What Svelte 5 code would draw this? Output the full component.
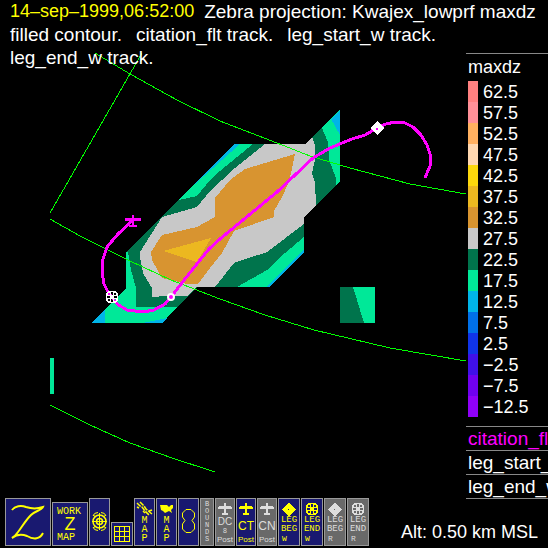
<script>
  const scale = [
    { value: "62.5", color: "#ff8080" },
    { value: "57.5", color: "#ff9098" },
    { value: "52.5", color: "#ffb060" },
    { value: "47.5", color: "#ffd8b0" },
    { value: "42.5", color: "#fcd80c" },
    { value: "37.5", color: "#ecb820" },
    { value: "32.5", color: "#d89430" },
    { value: "27.5", color: "#c8c8c8" },
    { value: "22.5", color: "#00744c" },
    { value: "17.5", color: "#00e898" },
    { value: "12.5", color: "#00b4e8" },
    { value: "7.5", color: "#0070e8" },
    { value: "2.5", color: "#1034e8" },
    { value: "−2.5", color: "#4010e8" },
    { value: "−7.5", color: "#7000f0" },
    { value: "−12.5", color: "#9000f8" },
  ];

  const layers = [
    { name: "citation_flt", active: true },
    { name: "leg_start_w" },
    { name: "leg_end_w" },
  ];

  const posts = [
    { lines: ["DC", "8"], on: false },
    { lines: ["CT"], on: true },
    { lines: ["CN"], on: false },
  ];

  const legs = [
    { mark: "diamond", word: "BEG", side: "W", on: true },
    { mark: "target", word: "END", side: "W", on: true },
    { mark: "diamond", word: "BEG", side: "R", on: false },
    { mark: "target", word: "END", side: "R", on: false },
  ];
</script>

{#snippet target()}
  <path
    fill="currentColor"
    fill-rule="evenodd"
    stroke="none"
    d="M-4 -6H4V-5H5V-4H6V4H5V5H4V6H-4V5H-5V4H-6V-4H-5V-5H-4ZM-4 -4V-2H-2V-4ZM2 -4V-2H4V-4ZM-4 2V4H-2V2ZM2 2V4H4V2ZM-1 -5V-2H1V-5ZM-1 2V5H1V2ZM-5 -1V1H-2V-1ZM2 -1V1H5V-1Z"
  />
{/snippet}

<main>
  <section class="stage">
    <svg class="map" viewBox="0 0 466 498" role="img" aria-label="maxdz filled contour">
      <g shape-rendering="crispEdges">
        <path
          fill="#00e898"
          d="M234 144H305L340 110V181L304 217V251L269 287H197L162 323H91L126 288V252ZM340 287H375V323H340ZM50 358H54V394H50Z"
        />
        <path
          fill="#00b4e8"
          d="M234 144H240L195 184ZM340 110L331 119L340 135ZM304 249V252L269 287H266ZM91 323L105 309V323ZM143 323L167 318L162 323Z"
        />
        <path
          fill="#00744c"
          d="M253 144L231 162L220 171L210 180L197 196L179 200L126 252H128L131 270L136 288V307H177L197 287H237L267 270L285 253L304 237V217L316 205L336 185V178L329 160L328 142L322 128L305 144ZM340 287H353L364 323H340Z"
        />
        <path
          fill="#c8c8c8"
          d="M265 144H305L312 137L315 145V160L312 173L315 183L316 205L304 217V224L267 252L234 263L215 287H197L187 296H165L152 297V288L143 273L140 257V252L162 217L197 207L210 191L222 180L235 168Z"
        />
        <path
          fill="#d89430"
          d="M295 154L291 173L288 184L282 197L274 211V217L234 231L222 253L210 268L198 284H187L162 278L152 260L151 252L162 235L197 227L215 217V198L230 180L245 169Z"
        />
        <path fill="#ecb820" d="M163 251L211 238L197 262Z" />
        <g fill="none" stroke="#00ff00">
          <path d="M50 213L142 53" />
          <path d="M95 53L130 74L177 100L220 121L277 143L310 156L350 168L410 184L466 194" />
          <path d="M50 219L80 236L130 261L171 280L220 299L265 315L314 330L390 348L466 361" />
          <path d="M50 405L90 425L130 443L172 458L215 472" />
        </g>
        <path
          fill="none"
          stroke="#ff00ff"
          stroke-width="3"
          stroke-linejoin="round"
          d="M133 220L118 234L107 247L103 259L102 272L104 284L108 292L117 304L127 310L143 312L154 310L165 304L171 297L185 279L200 260L209 249L220 239L243 220L277 192L313 158L330 148L352 139L365 135L377 128L386 124L395 122L405 123L413 127L421 135L427 145L431 157L430 166L425 178"
        />
        <path fill="#ff00ff" d="M125 218H141V221H125ZM132 215H134V227H132ZM129 225H137V227H129Z" />
        <path fill="#fff" d="M377 121L384 128L377 135L370 128Z" />
        <path fill="#ff00ff" d="M376 128H378V130H376Z" />
        <g class="fix" transform="translate(112 297)">{@render target()}</g>
      </g>
      <circle cx="171" cy="297" r="3" fill="#ff00ff" stroke="#fff" stroke-width="2" />
    </svg>

    <header>
      <p class="first"><time>14–sep–1999,06:52:00</time><span>Zebra projection: Kwajex_lowprf maxdz</span></p>
      <p><span>filled contour.</span><span>citation_flt track.</span><span>leg_start_w track.</span></p>
      <p><span>leg_end_w track.</span></p>
    </header>

    <aside>
      <h2>maxdz</h2>
      <ul class="scale">
        {#each scale as step}
          <li>
            <span class="swatch" style="background: {step.color}"></span>
            {step.value}
          </li>
        {/each}
      </ul>
      <ul class="layers">
        {#each layers as layer}
          <li class:active={layer.active}>{layer.name}</li>
        {/each}
      </ul>
    </aside>
  </section>

  <footer>
    <nav>
      <button class="zebra" aria-label="Zebra">
        <svg viewBox="0 0 44 46" width="44" height="46">
          <path
            d="M6 11C9 7 15 6 20 8C26 10 31 10 37 8C36 11 29 12 25 16C19 22 16 28 12 33C10 36 8 38 6 39C11 35 16 35 21 37C28 41 34 40 37 34"
            stroke-width="2"
          />
        </svg>
      </button>
      <button class="work">
        <span>WORK</span>
        <span class="big">Z</span>
        <span>MAP</span>
      </button>
      <button class="narrow" aria-label="Radar">
        <svg viewBox="0 0 19 46" width="19" height="46">
          <circle cx="9.500" cy="22.500" r="6.500" stroke-width="1.500" />
          <circle cx="9.500" cy="22.500" r="3" stroke-width="1.500" />
          <path d="M9.500 14V31M2 22.500H17M3 17Q4 13.500 8 13.500M16 17Q15 13.500 11 13.500M3 28Q4 31.500 8 31.500M16 28Q15 31.500 11 31.500M3 16L6 18M16 16L13 18M3 29L6 27M16 29L13 27" />
        </svg>
      </button>
      <button class="grid" aria-label="Grid">
        <svg viewBox="0 0 20 22" width="20" height="22" shape-rendering="crispEdges">
          <path d="M2.500 3.500H17.500V18.500H2.500ZM7.500 3.500V18.500M12.500 3.500V18.500M2.500 8.500H17.500M2.500 13.500H17.500" />
        </svg>
      </button>
      <button class="narrow map-button">
        <svg viewBox="0 0 19 17" width="19" height="17">
          <path
            stroke-width="1.500"
            stroke-dasharray="5 1"
            d="M2 4L5 7L7 8L10 12L14 16M5 3L9 7L11 10L17 15M2 8L4 9M8 12L10 14M14 12L17 11"
          />
        </svg>
        <span>M</span><span>A</span><span>P</span>
      </button>
      <button class="narrow map-button">
        <svg viewBox="0 0 19 17" width="19" height="17">
          <path
            fill="currentColor"
            stroke="none"
            d="M3 6H10L12 8L14 6H16V9L14 11L15 14L12 12L10 13L8 14L6 12L4 11Z"
          />
        </svg>
        <span>M</span><span>A</span><span>P</span>
      </button>
      <button class="narrow" aria-label="Figure eight">
        <svg viewBox="0 0 19 46" width="19" height="46">
          <path d="M7 10.500H12L15.500 14V18L13 21.500L15.500 25V30L12 33.500H7L3.500 30V25L6 21.500L3.500 18V14Z" />
        </svg>
      </button>
      <button class="bounds off">
        {#each "BOUNDS" as letter}
          <span>{letter}</span>
        {/each}
      </button>
      {#each posts as post}
        <button class="post" class:off={!post.on}>
          <svg viewBox="0 0 18 18" width="18" height="18" shape-rendering="crispEdges">
            <path
              fill="currentColor"
              stroke="none"
              d="M8 4H10V7H15V8H16V10H10V14H12V16H6V14H8V10H2V8H3V7H8Z"
            />
          </svg>
          {#each post.lines as line}
            <span class:single={post.lines.length === 1} class:digit={line === "8"}>{line}</span>
          {/each}
          <span class="small">Post</span>
        </button>
      {/each}
      {#each legs as leg}
        <button class="leg" class:off={!leg.on}>
          <svg viewBox="0 0 20 17" width="20" height="17" shape-rendering="crispEdges">
            {#if leg.mark === "diamond"}
              <path
                fill="currentColor"
                fill-rule="evenodd"
                stroke="none"
                d="M10 4L17 10.500L10 17L3 10.500ZM9 10V11H10V10Z"
              />
            {:else}
              <g transform="translate(10 10)">{@render target()}</g>
            {/if}
          </svg>
          <span>LEG</span>
          <span>{leg.word}</span>
          <span class="side">{leg.side}</span>
        </button>
      {/each}
    </nav>
    <output>Alt: 0.50 km MSL</output>
  </footer>
</main>

<style>
  :global(body) {
    margin: 0;
    background: #000;
  }
  main {
    display: flex;
    flex-direction: column;
    min-height: 100vh;
    background: #000;
    color: #fff;
    font-family: "Liberation Sans", Arial, sans-serif;
    font-size: 18px;
    line-height: 23px;
    overflow: hidden;
  }
  p,
  h2,
  ul {
    margin: 0;
    padding: 0;
    list-style: none;
  }

  /* header and map share the same grid area, text on top */
  .stage {
    display: grid;
    grid-template-columns: minmax(0, 1fr) 82px;
    align-items: start;
  }
  .map {
    grid-area: 1 / 1;
    display: block;
    width: 100%;
  }
  .fix {
    color: #fff;
  }
  header {
    grid-area: 1 / 1 / 2 / 3;
    padding: 0 10px;
    white-space: nowrap;
  }
  header p {
    display: flex;
    gap: 14px;
    font-size: 19px;
  }
  header .first {
    gap: 10px;
  }
  time {
    color: #ffff00;
    font-size: 18px;
  }

  aside {
    grid-area: 1 / 2;
    margin-top: 53px;
    border-top: 1px solid #888;
    white-space: nowrap;
    overflow: hidden;
  }
  h2 {
    padding: 2px 2px;
    font-size: 18px;
    font-weight: normal;
  }
  .scale {
    padding: 0 2px 9px;
  }
  .scale li {
    display: flex;
    gap: 5px;
    height: 21px;
  }
  .swatch {
    width: 10px;
  }
  .layers {
    border-top: 1px solid #888;
  }
  .layers li {
    height: 23px;
    padding-left: 2px;
    font-size: 19px;
    border-bottom: 1px solid #888;
  }
  .active {
    color: #ff00ff;
  }

  footer {
    display: flex;
    justify-content: space-between;
    align-items: flex-end;
    margin-top: -1px;
    padding: 0 10px 2px 5px;
  }
  output {
    padding-bottom: 2px;
    white-space: nowrap;
  }
  nav {
    display: flex;
    align-items: flex-end;
    gap: 1px;
  }
  button {
    box-sizing: border-box;
    display: flex;
    flex: none;
    flex-direction: column;
    align-items: center;
    height: 48px;
    margin: 0;
    padding: 0;
    border: 1px solid #999;
    background: #191970;
    color: #ffff00;
    font-family: "Liberation Mono", "Courier New", monospace;
    font-size: 10px;
    line-height: 9px;
  }
  button svg {
    display: block;
    flex: none;
    fill: none;
    stroke: currentColor;
  }
  .off {
    background: #696969;
    color: #ddd;
  }
  .zebra {
    width: 46px;
  }
  .work {
    width: 36px;
    height: 44px;
    padding: 4px;
    align-items: flex-start;
  }
  .work .big {
    align-self: center;
    font-family: "Liberation Sans", Arial, sans-serif;
    font-size: 18px;
    line-height: 17px;
  }
  .narrow {
    width: 21px;
  }
  .grid {
    width: 22px;
    height: 24px;
  }
  .bounds {
    width: 14px;
    padding-top: 2px;
    font-size: 7px;
    line-height: 7px;
  }
  .post {
    width: 20px;
    font-family: "Liberation Sans", Arial, sans-serif;
    line-height: 10px;
  }
  .post .digit {
    font-size: 7px;
    line-height: 8px;
  }
  .post .single {
    font-size: 12px;
    line-height: 18px;
  }
  .post .small {
    font-size: 8px;
    line-height: 9px;
  }
  .leg {
    width: 22px;
    font-size: 9px;
    line-height: 9px;
  }
  .leg .side {
    align-self: flex-start;
    padding-left: 3px;
    font-size: 8px;
    line-height: 10px;
  }
</style>
